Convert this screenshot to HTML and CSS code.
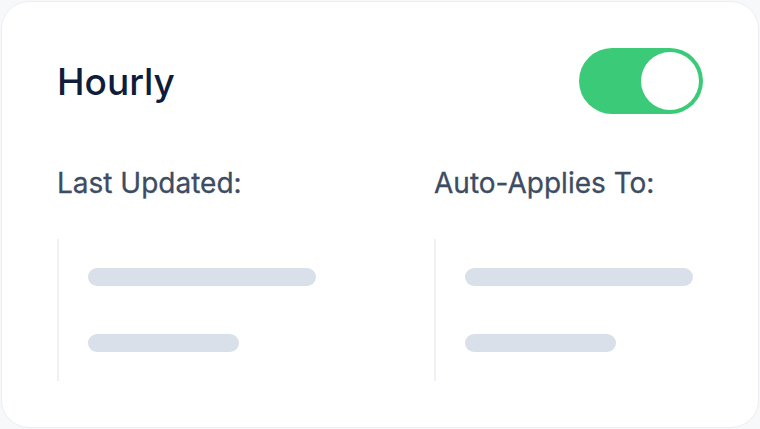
FILE: index.html
```html
<!DOCTYPE html>
<html lang="en">
<head>
  <meta charset="UTF-8">
  <title>Hourly</title>
  <link rel="stylesheet" href="styles.css">
</head>
<body>

  <div class="card">
    <div class="card-head">
      <h1>Hourly</h1>
      <div class="toggle on">
        <span class="knob"></span>
      </div>
    </div>

    <div class="cols">
      <div class="col">
        <h2>Last Updated:</h2>
        <div class="detail">
          <span class="bar long"></span>
          <span class="bar short"></span>
        </div>
      </div>
      <div class="col">
        <h2>Auto-Applies To:</h2>
        <div class="detail">
          <span class="bar long"></span>
          <span class="bar short"></span>
        </div>
      </div>
    </div>
  </div>

</body>
</html>
```

FILE: styles.css
```css
body {
  margin: 0;
  background-color: #f7f8fa;
  font-family: Inter, "Noto Sans", sans-serif;
}
.card {
  box-sizing: border-box;
  width: 758px;
  height: 427px;
  margin: 1px;
  padding: 46px 55px 0 55px;
  background: white;
  border: 1px solid #eceef2;
  border-radius: 28px;
}
.card-head {
  display: flex;
  justify-content: space-between;
  align-items: center;
  height: 66px;
}
h1 {
  margin: 0;
  font-size: 37px;
  font-weight: 500;
  color: #0d1d3b;
}
.toggle {
  box-sizing: border-box;
  width: 124px;
  height: 66px;
  padding: 4px;
  border-radius: 33px;
  background-color: #cbd5e1;
  display: flex;
}
.toggle.on {
  background-color: #3bcb78;
  justify-content: flex-end;
}
.knob {
  width: 58px;
  height: 58px;
  border-radius: 50%;
  background: white;
}
.cols {
  display: grid;
  grid-template-columns: 377px 1fr;
  margin-top: 52px;
}
h2 {
  margin: 0;
  font-size: 28px;
  line-height: 34px;
  font-weight: 400;
  color: #3d4c62;
  -webkit-text-stroke: 0.3px #3d4c62;
}
.detail {
  margin-top: 39px;
  height: 142px;
  box-sizing: border-box;
  border-left: 2px solid #eef1f5;
  padding: 29px 0 0 29px;
  display: flex;
  flex-direction: column;
  gap: 48px;
}
.bar {
  display: block;
  height: 18px;
  border-radius: 9px;
  background-color: #d9e0ea;
}
.bar.long {
  width: 228px;
}
.bar.short {
  width: 151px;
}
```
